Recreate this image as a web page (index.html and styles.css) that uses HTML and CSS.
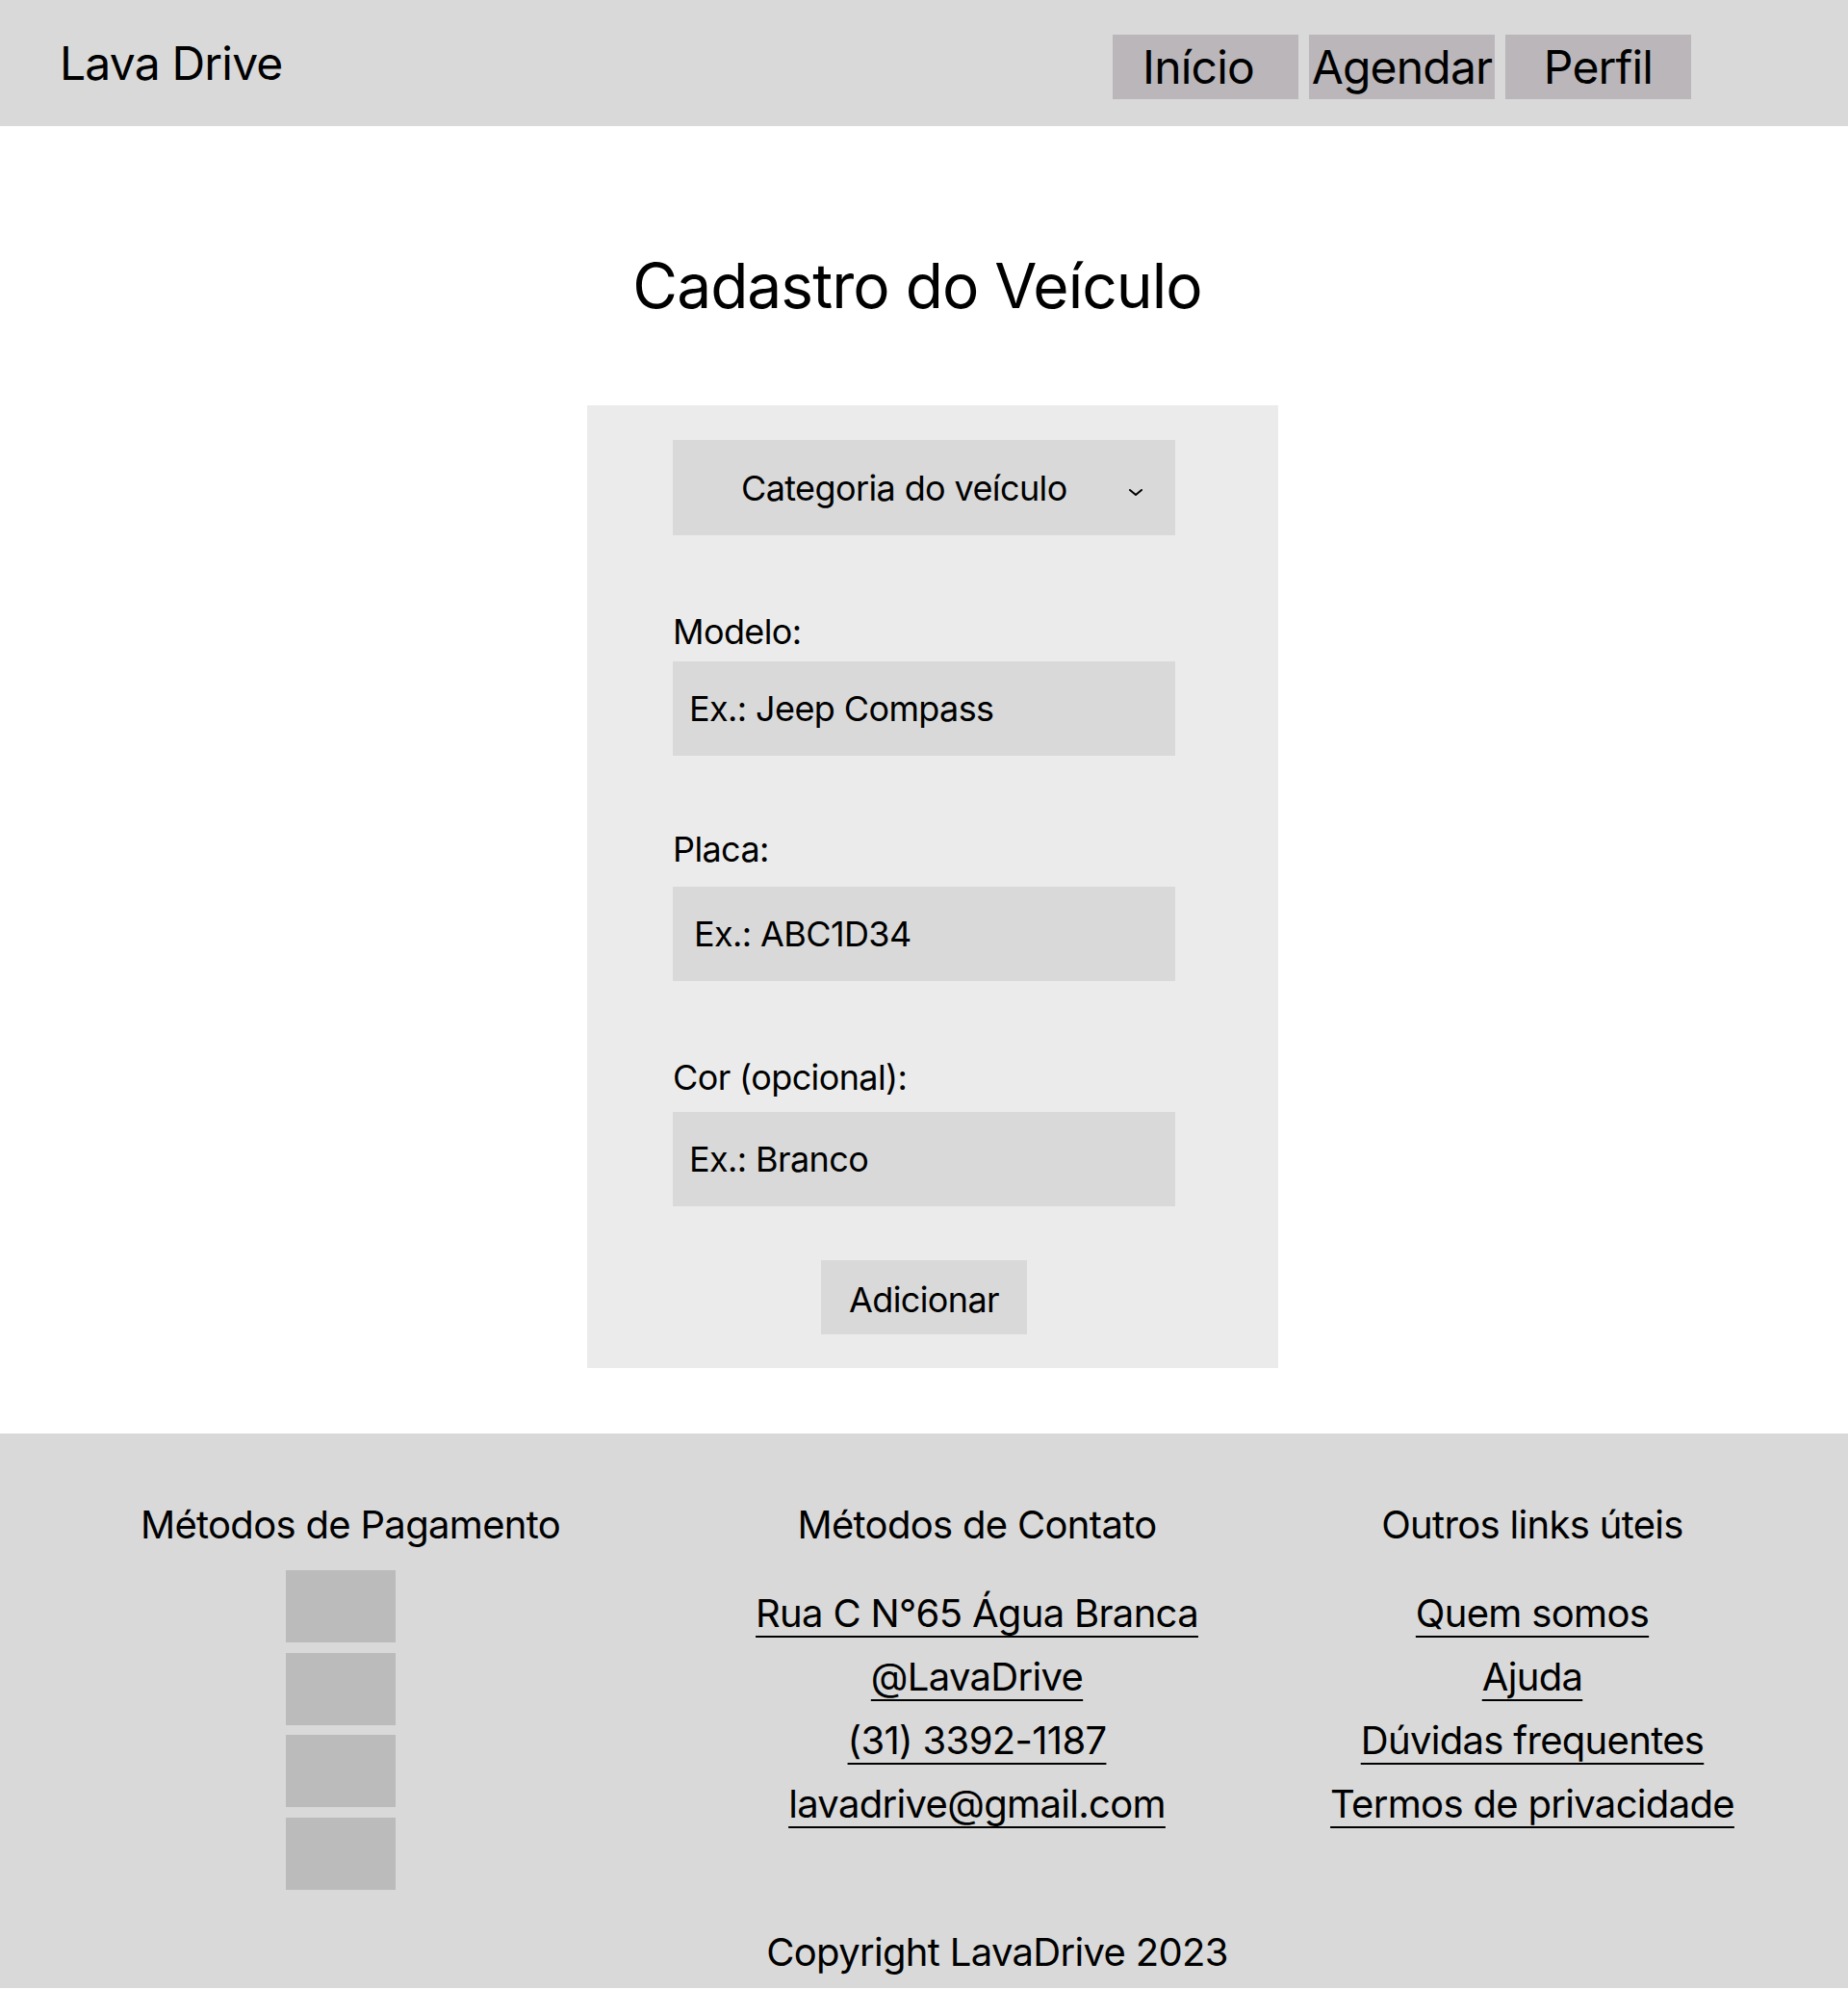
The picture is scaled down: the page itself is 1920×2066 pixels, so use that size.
FILE: index.html
```html
<!DOCTYPE html>
<html lang="pt-BR">
<head>
<meta charset="utf-8">
<title>Lava Drive - Cadastro do Veículo</title>
<link rel="stylesheet" href="styles.css">
</head>
<body>
<header class="topbar">
  <div class="logo">Lava Drive</div>
  <nav class="nav">
    <a class="nav-btn nav-btn--home" href="#">Início</a>
    <a class="nav-btn" href="#">Agendar</a>
    <a class="nav-btn" href="#">Perfil</a>
  </nav>
</header>

<main class="content">
  <h1 class="page-title">Cadastro do Veículo</h1>
  <form class="vehicle-form">
    <div class="select-box">
      <span>Categoria do veículo</span>
      <svg class="chevron" width="16" height="9" viewBox="0 0 16 9"><polyline points="2,2 8,7 14,2" fill="none" stroke="#000" stroke-width="2" stroke-linecap="round" stroke-linejoin="round"/></svg>
    </div>

    <div class="field field--model">
      <label class="field-label">Modelo:</label>
      <input class="field-input" type="text" placeholder="Ex.: Jeep Compass">
    </div>

    <div class="field field--plate">
      <label class="field-label">Placa:</label>
      <input class="field-input field-input--plate" type="text" placeholder="Ex.: ABC1D34">
    </div>

    <div class="field field--color">
      <label class="field-label">Cor (opcional):</label>
      <input class="field-input" type="text" placeholder="Ex.: Branco">
    </div>

    <button class="add-btn" type="button">Adicionar</button>
  </form>
</main>

<footer class="site-footer">
  <div class="footer-cols">
    <section class="footer-col">
      <h2 class="footer-heading">Métodos de Pagamento</h2>
      <div class="pay-list">
        <div class="pay-item"></div>
        <div class="pay-item"></div>
        <div class="pay-item"></div>
        <div class="pay-item"></div>
      </div>
    </section>
    <section class="footer-col">
      <h2 class="footer-heading">Métodos de Contato</h2>
      <ul class="link-list">
        <li><a href="#">Rua C N°65 Água Branca</a></li>
        <li><a href="#">@LavaDrive</a></li>
        <li><a href="#">(31) 3392-1187</a></li>
        <li><a href="#">lavadrive@gmail.com</a></li>
      </ul>
    </section>
    <section class="footer-col">
      <h2 class="footer-heading">Outros links úteis</h2>
      <ul class="link-list">
        <li><a href="#">Quem somos</a></li>
        <li><a href="#">Ajuda</a></li>
        <li><a href="#">Dúvidas frequentes</a></li>
        <li><a href="#">Termos de privacidade</a></li>
      </ul>
    </section>
  </div>
  <p class="copyright">Copyright LavaDrive 2023</p>
</footer>
</body>
</html>
```

FILE: styles.css
```css
* { box-sizing: border-box; }

body {
  margin: 0;
  font-family: Inter, "Noto Sans", sans-serif;
  color: #000;
  background: #fff;
}

.topbar {
  height: 131px;
  background: #d9d9d9;
  display: flex;
  align-items: center;
  justify-content: space-between;
  padding: 0 163px 0 62px;
}

.logo {
  font-size: 48px;
  letter-spacing: -0.017em;
  line-height: 58px;
}

.nav {
  display: flex;
  gap: 11px;
  align-self: flex-start;
  margin-top: 36px;
}

.nav-btn {
  width: 193px;
  height: 67px;
  background: #bab6ba;
  color: #000;
  text-decoration: none;
  font-size: 48px;
  letter-spacing: -0.017em;
  line-height: 67px;
  text-align: center;
}

.nav-btn--home { padding-right: 15px; }

.content {
  padding-bottom: 68px;
}

.page-title {
  margin: 127px 0 0;
  padding-right: 14px;
  font-size: 64px;
  letter-spacing: -0.015em;
  line-height: 78px;
  font-weight: 400;
  text-align: center;
}

.vehicle-form {
  width: 718px;
  margin: 85px 0 0 calc(50% - 350px);
  background: #ebebeb;
  padding: 36px 107px 35px 89px;
}

.select-box {
  height: 99px;
  background: #d9d9d9;
  display: flex;
  align-items: center;
  justify-content: space-between;
  padding: 0 33px 0 71px;
  font-size: 36px;
  letter-spacing: -0.017em;
}

.chevron { margin-top: 9px; }

.field { display: flex; flex-direction: column; }
.field--model { margin-top: 82px; gap: 13px; }
.field--plate { margin-top: 79px; gap: 21px; }
.field--color { margin-top: 82px; gap: 18px; }

.field-label {
  font-size: 36px;
  letter-spacing: -0.017em;
  line-height: 36px;
}

.field-input {
  height: 98px;
  border: none;
  outline: none;
  background: #d9d9d9;
  font-family: inherit;
  font-size: 36px;
  letter-spacing: -0.017em;
  padding: 0 0 0 17px;
  color: #000;
}
.field-input--plate { padding-left: 22px; }
.field-input::placeholder { color: #000; opacity: 1; }

.add-btn {
  display: block;
  width: 214px;
  height: 77px;
  margin: 56px auto 0 auto;
  border: none;
  background: #d9d9d9;
  font-family: inherit;
  font-size: 36px;
  letter-spacing: -0.017em;
  color: #000;
  padding: 4px 0 0 0;
}

.site-footer {
  background: #d9d9d9;
  padding: 71px 0 15px;
}

.footer-cols {
  display: grid;
  grid-template-columns: 728px 574px 580px;
}

.footer-col {
  display: flex;
  flex-direction: column;
  align-items: center;
}

.footer-heading {
  margin: 0;
  font-size: 40px;
  letter-spacing: -0.017em;
  line-height: 48px;
  font-weight: 400;
}

.pay-list {
  display: flex;
  flex-direction: column;
  gap: 10.67px;
  margin: 23px 20px 0 0;
}

.pay-item {
  width: 114px;
  height: 75px;
  background: #bbbbbb;
}

.link-list {
  list-style: none;
  margin: 35px 0 0;
  padding: 0;
  text-align: center;
}

.link-list li {
  font-size: 40px;
  letter-spacing: -0.017em;
  line-height: 66px;
}

.link-list a {
  color: #000;
  text-decoration: underline;
  text-decoration-thickness: 2px;
  text-underline-offset: 9px;
}

.copyright {
  margin: 43px 0 0;
  padding-left: 152px;
  text-align: center;
  font-size: 40px;
  letter-spacing: -0.017em;
  line-height: 44px;
}
```
